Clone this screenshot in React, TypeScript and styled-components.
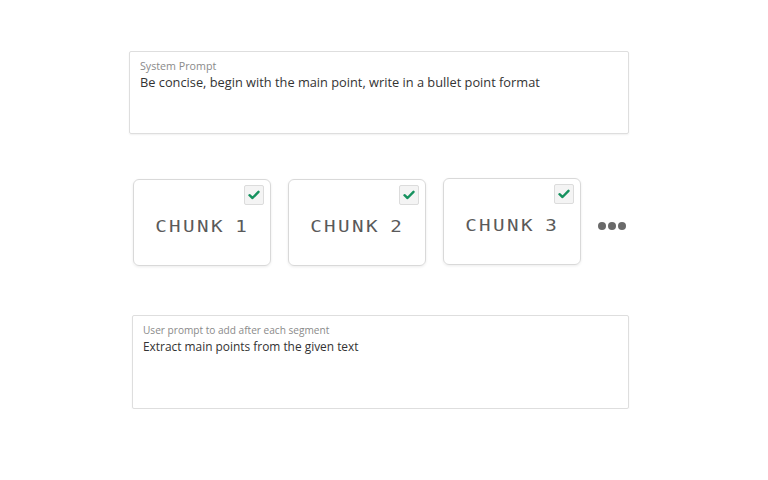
import { FC } from 'react'
import styled, { createGlobalStyle } from 'styled-components'

const GlobalStyle = createGlobalStyle`
  html, body {
    margin: 0;
    padding: 0;
    background: #ffffff;
  }
  body {
    font-family: "Open Sans", "Noto Sans", sans-serif;
  }
`

const chunks = ['CHUNK 1', 'CHUNK 2', 'CHUNK 3']

const PromptBox: FC<{ label: string; text: string; inset?: number; height: number; small?: boolean }> = ({
  label,
  text,
  inset = 0,
  height,
  small,
}) => (
  <PromptField $inset={inset} $height={height}>
    <FieldLabel $small={small}>{label}</FieldLabel>
    <FieldText $small={small}>{text}</FieldText>
  </PromptField>
)

const CheckIcon: FC = () => (
  <svg width="12" height="10" viewBox="0 0 12 10">
    <path d="M1.5 5.2 L4.5 8 L10.5 1.8" fill="none" stroke="#16925f" strokeWidth="2.4" strokeLinecap="round" strokeLinejoin="round" />
  </svg>
)

const App: FC = () => {
  return (
    <>
      <GlobalStyle />
      <Page>
        <PromptBox
          label="System Prompt"
          text="Be concise, begin with the main point, write in a bullet point format"
          height={83}
        />
        <ChunkRow>
          {chunks.map((c, i) => (
            <ChunkCard key={c} $lift={i === 2}>
              <CheckBox>
                <CheckIcon />
              </CheckBox>
              <ChunkLabel>{c}</ChunkLabel>
            </ChunkCard>
          ))}
          <More>
            <Dot />
            <Dot />
            <Dot />
          </More>
        </ChunkRow>
        <PromptBox
          label="User prompt to add after each segment"
          text="Extract main points from the given text"
          inset={3}
          height={94}
          small
        />
      </Page>
    </>
  )
}

export default App

const Page = styled.div`
  width: 500px;
  margin-left: 129px;
  padding-top: 51px;
  display: flex;
  flex-direction: column;
`

const PromptField = styled.div<{ $inset: number; $height: number }>`
  box-sizing: border-box;
  margin-left: ${({ $inset }) => $inset}px;
  height: ${({ $height }) => $height}px;
  border: 1px solid #dedede;
  border-radius: 2px;
  box-shadow: 0 1px 2px rgba(0, 0, 0, 0.06);
  padding: 7px 10px;
  display: flex;
  flex-direction: column;
`

const FieldLabel = styled.div<{ $small?: boolean }>`
  font-size: ${({ $small }) => ($small ? '10.1px' : '10.7px')};
  line-height: 14px;
  color: #8a8a8a;
`

const FieldText = styled.div<{ $small?: boolean }>`
  font-size: ${({ $small }) => ($small ? '11.9px' : '12.8px')};
  line-height: 18px;
  color: #333333;
`

const ChunkRow = styled.div`
  display: flex;
  align-items: flex-start;
  gap: 17px;
  padding-left: 4px;
  margin-top: 45px;
  margin-bottom: 49px;
`

const ChunkCard = styled.div<{ $lift?: boolean }>`
  position: relative;
  box-sizing: border-box;
  width: 138px;
  height: 87px;
  margin-top: ${({ $lift }) => ($lift ? '-1px' : '0')};
  border: 1px solid #d9d9d9;
  border-radius: 6px;
  box-shadow: 0 1px 3px rgba(0, 0, 0, 0.08);
  display: flex;
  align-items: center;
  justify-content: center;
  padding-top: 8px;
`

const CheckBox = styled.div`
  position: absolute;
  top: 5px;
  right: 6px;
  box-sizing: border-box;
  width: 20px;
  height: 20px;
  border: 1px solid #dcdcdc;
  background: #f4f4f4;
  border-radius: 2px;
  display: flex;
  align-items: center;
  justify-content: center;
`

const ChunkLabel = styled.div`
  font-family: "DejaVu Sans Mono", "Liberation Mono", monospace;
  font-size: 16px;
  letter-spacing: 2px;
  word-spacing: -3px;
  color: #5a5a5a;
  transform: scale(1.2, 1);
  white-space: nowrap;
`

const More = styled.div`
  display: flex;
  gap: 2px;
  align-self: center;
  margin-left: 0px;
  margin-top: 6px;
`

const Dot = styled.span`
  width: 8px;
  height: 8px;
  border-radius: 50%;
  background: #6a6a6a;
`
